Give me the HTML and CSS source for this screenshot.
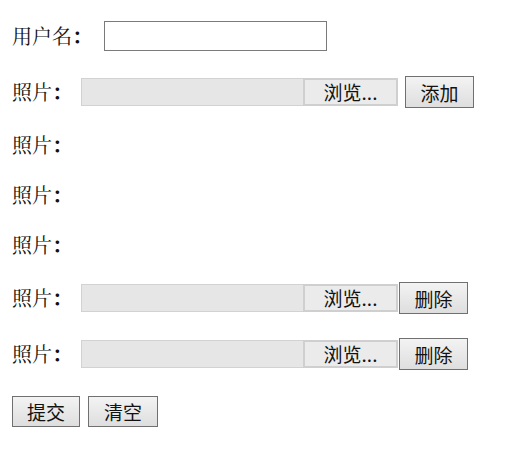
FILE: index.html
```html
<!DOCTYPE html>
<html lang="zh">
<head>
<meta charset="utf-8">
<title>上传照片</title>
<link rel="stylesheet" href="styles.css">
</head>
<body>
<form class="form">
  <div class="row row-ctrl">
    <span class="label label-wide">用户名<span class="colon">：</span></span>
    <input class="text-input" type="text">
  </div>
  <div class="row row-ctrl">
    <span class="label">照片<span class="colon">：</span></span>
    <span class="file"><span class="file-field"></span><span class="file-btn">浏览...</span></span>
    <button type="button" class="btn btn-add">添加</button>
  </div>
  <div class="row row-text"><span class="label">照片<span class="colon">：</span></span></div>
  <div class="row row-text"><span class="label">照片<span class="colon">：</span></span></div>
  <div class="row row-text"><span class="label">照片<span class="colon">：</span></span></div>
  <div class="row row-ctrl">
    <span class="label">照片<span class="colon">：</span></span>
    <span class="file"><span class="file-field"></span><span class="file-btn">浏览...</span></span>
    <button type="button" class="btn btn-del">删除</button>
  </div>
  <div class="row row-ctrl">
    <span class="label">照片<span class="colon">：</span></span>
    <span class="file"><span class="file-field"></span><span class="file-btn">浏览...</span></span>
    <button type="button" class="btn btn-del">删除</button>
  </div>
  <div class="row row-actions">
    <button type="button" class="btn btn-submit">提交</button>
    <button type="button" class="btn btn-clear">清空</button>
  </div>
</form>
</body>
</html>
```
FILE: styles.css
```css
html, body {
  margin: 0;
  padding: 0;
  background: #ffffff;
}
body {
  font-family: "Noto Serif CJK SC", "Noto Sans CJK SC", serif;
  color: #111;
}
.form {
  display: flex;
  flex-direction: column;
  gap: 18px;
  padding: 17px 12px;
}
.row {
  display: flex;
  align-items: center;
}
.row-ctrl { height: 38px; }
.row-text { height: 32px; }
.row-actions { height: 32px; gap: 8px; margin-top: 4px; }
.label {
  font-size: 20px;
  line-height: 1;
  width: 69px;
  flex: none;
  white-space: nowrap;
}
.label-wide { width: 92px; }
.colon {
  font-family: "Noto Serif CJK TC", "Noto Serif CJK SC", serif;
  font-weight: 700;
}
.text-input {
  box-sizing: border-box;
  width: 223px;
  height: 30px;
  border: 1px solid #7a7a7a;
  background: #fff;
  margin: 0;
  padding: 0;
}
.file {
  display: flex;
  height: 28px;
}
.file-field {
  box-sizing: border-box;
  width: 222px;
  height: 28px;
  background: #e6e6e6;
  border: 1px solid #d2d2d2;
  border-right: none;
}
.file-btn {
  box-sizing: border-box;
  width: 95px;
  height: 28px;
  background: #ebebeb;
  border: 2px solid #cfcfcf;
  font-family: "Noto Sans CJK SC", sans-serif;
  font-size: 19px;
  line-height: 24px;
  text-align: center;
  color: #111;
}
.btn {
  box-sizing: border-box;
  height: 32px;
  border: 1px solid #707070;
  background: linear-gradient(#f3f3f3, #dedede);
  font-family: "Noto Sans CJK SC", sans-serif;
  font-size: 19px;
  line-height: 1;
  color: #111;
  padding: 0;
  margin: 0;
}
.btn-add { width: 69px; margin-left: 7px; }
.btn-del { width: 69px; margin-left: 1px; }
.btn-submit { width: 68px; height: 31px; }
.btn-clear { width: 70px; height: 31px; }
```
